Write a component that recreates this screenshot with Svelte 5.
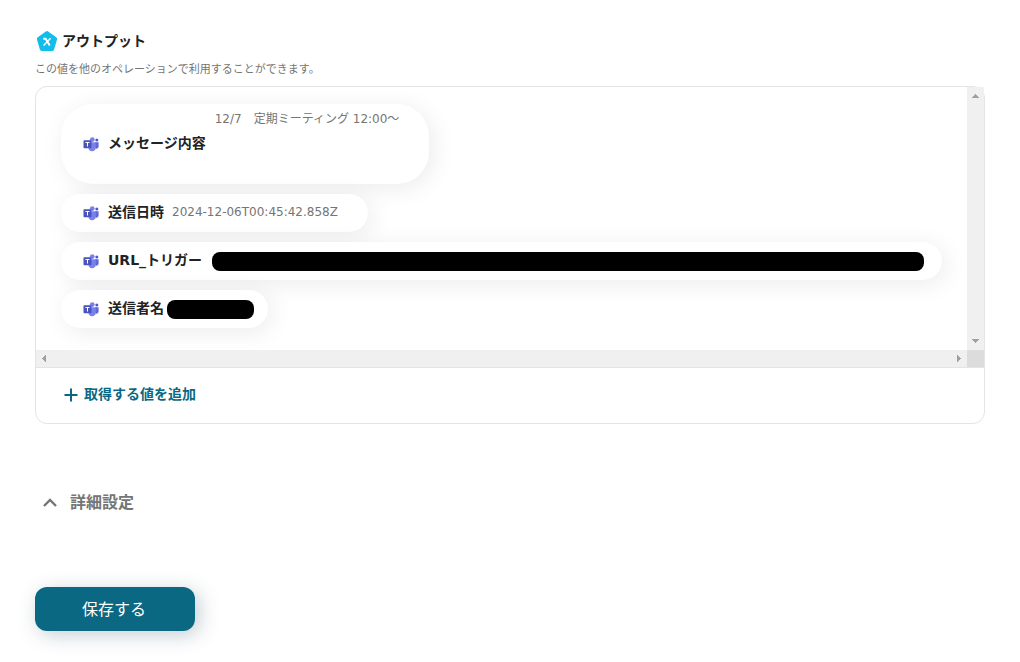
<script lang="ts">
    const outputs = [
        { label: "メッセージ内容", value: "12/7　定期ミーティング 12:00～", kind: "long" },
        { label: "送信日時", value: "2024-12-06T00:45:42.858Z", kind: "" },
        { label: "URL_トリガー", masked: 712, kind: "url" },
        { label: "送信者名", masked: 87, kind: "name" },
    ];
    let open = $state(false);
</script>

<main class="page">
    <header class="heading">
        <svg class="badge" viewBox="0 0 22 22" aria-hidden="true">
            <path
                d="M10.500 1.700a2.400 2.400 0 0 1 3 0l7.700 5.500a2.200 2.200 0 0 1 .8 2.400l-2.800 9.700a2.200 2.200 0 0 1-2 1.600H6.800a2.200 2.200 0 0 1-2-1.600L2 9.600a2.200 2.200 0 0 1 .8-2.400z"
                fill="#12bdec"
            />
            <path
                d="M8.200 8.800h2.400l4.200 6.600"
                fill="none"
                stroke="#fff"
                stroke-width="1.900"
            />
            <path d="M15.600 8.300L8.600 15.600" stroke="#fff" stroke-width="1.500" />
        </svg>
        <h1>アウトプット</h1>
    </header>
    <p class="note">この値を他のオペレーションで利用することができます。</p>

    <section class="panel">
        <div class="scroller">
            <ul class="list">
                {#each outputs as o}
                    <li class="chip {o.kind}">
                        <svg class="teams" viewBox="0 0 16 16" aria-hidden="true">
                            <circle cx="13.800" cy="4.100" r="1.500" fill="#5059c9" />
                            <path d="M12 6.300h3.600v4.400a2.300 2.300 0 0 1-3.600 1.600z" fill="#5f68d6" />
                            <circle cx="9.300" cy="3.600" r="2.400" fill="#7b83eb" />
                            <path d="M5.500 6.300h7.200v4.800a3.600 3.600 0 0 1-7.200 1z" fill="#7b83eb" />
                            <rect x="0.500" y="4.300" width="8" height="8" rx="0.700" fill="#4b53bc" />
                            <path d="M2.500 6.500h4M4.500 6.500v4" stroke="#fff" stroke-width="1" />
                        </svg>
                        <span class="label">{o.label}</span>
                        {#if o.masked}
                            <span class="mask" style="width: {o.masked}px"></span>
                        {:else}
                            <span class="value">{o.value}</span>
                        {/if}
                    </li>
                {/each}
            </ul>
            <div class="bar vertical">
                <svg viewBox="0 0 17 17"><path d="M5 11h7v-1h-1v-1h-1v-1H9V7H8v1H7v1H6v1H5z" /></svg>
                <svg viewBox="0 0 17 17"><path d="M5 6h7v1h-1v1h-1v1H9v1H8V9H7V8H6V7H5z" /></svg>
            </div>
            <div class="bar horizontal">
                <svg viewBox="0 0 17 17"><path d="M10 5v7H9v-1H8v-1H7V9H6V8h1V7h1V6h1V5z" /></svg>
                <svg viewBox="0 0 17 17"><path d="M7 5v7h1v-1h1v-1h1V9h1V8h-1V7H9V6H8V5z" /></svg>
            </div>
            <div class="corner"></div>
        </div>
        <button class="add" type="button">
            <svg viewBox="0 0 14 14" aria-hidden="true">
                <path d="M7 0.500v13M0.500 7h13" stroke="currentColor" stroke-width="2" />
            </svg>
            <span>取得する値を追加</span>
        </button>
    </section>

    <button class="advanced" type="button" aria-expanded={open} onclick={() => (open = !open)}>
        <svg viewBox="0 0 14 10" aria-hidden="true">
            <path d="M1 8l6-6 6 6" fill="none" stroke="currentColor" stroke-width="2.400" />
        </svg>
        <span>詳細設定</span>
    </button>

    <button class="save" type="button">保存する</button>
</main>

<style>
    :global(body) {
        background: #fff;
    }

    .page {
        padding: 30px 35px;
        color: #222;
        font-family: "DejaVu Sans", "Noto Sans CJK JP", sans-serif;
    }

    .heading {
        display: flex;
        align-items: center;
        gap: 5px;
        height: 22px;
    }

    .badge {
        width: 22px;
        height: 22px;
    }

    h1 {
        margin: 0;
        font-size: 14px;
        line-height: 20px;
    }

    .note {
        margin: 9px 0 7px;
        color: #757575;
        font-size: 11px;
        line-height: 18px;
    }

    .panel {
        border: 1px solid #e4e4e4;
        border-radius: 12px;
    }

    .scroller {
        display: grid;
        grid-template-columns: minmax(0, 1fr) 17px;
        grid-template-rows: auto 17px;
        border-bottom: 1px solid #e4e4e4;
    }

    .list {
        display: flex;
        flex-direction: column;
        align-items: flex-start;
        gap: 10px;
        margin: 0;
        padding: 17px 24px 22px 25px;
        list-style: none;
        overflow: hidden;
        border-top-left-radius: 12px;
    }

    .chip {
        display: flex;
        align-items: center;
        box-sizing: border-box;
        min-height: 38px;
        padding: 6px 30px 6px 22px;
        border-radius: 32px;
        background: #fff;
        box-shadow: 4px 4px 24px rgba(0, 0, 0, 0.08);
        white-space: nowrap;
    }

    .chip.url {
        padding-right: 18px;
    }

    .chip.name {
        padding-right: 14px;
    }

    .teams {
        flex: none;
        width: 16px;
        height: 16px;
        margin-right: 9px;
    }

    .label {
        padding-bottom: 2px;
        font-size: 14px;
        font-weight: 700;
        line-height: 20px;
    }

    .value {
        padding-bottom: 2px;
        margin-left: 8px;
        color: #757575;
        font-size: 12px;
        line-height: 17px;
    }

    .long .value {
        min-height: 66px;
        margin-left: 9px;
        padding: 1px 0;
    }

    .mask {
        height: 19px;
        margin-left: 10px;
        border-radius: 8px;
        background: #000;
    }

    .name .mask {
        margin-left: 3px;
    }

    .bar {
        display: flex;
        justify-content: space-between;
        background: #f0f0f0;
        fill: #a0a0a0;
    }

    .bar svg {
        width: 17px;
        height: 17px;
    }

    .vertical {
        flex-direction: column;
    }

    .corner {
        background: #dcdcdc;
    }

    button {
        border: 0;
        background: none;
        font-family: inherit;
        cursor: pointer;
    }

    .add {
        display: flex;
        align-items: center;
        gap: 6px;
        height: 54px;
        margin-bottom: 1px;
        padding: 0 28px;
        color: #0b6882;
        font-size: 14px;
        font-weight: 700;
    }

    .add span {
        padding-bottom: 4px;
    }

    .add svg {
        width: 14px;
        height: 14px;
    }

    .advanced {
        display: flex;
        align-items: center;
        gap: 13px;
        margin-top: 67px;
        padding: 0 8px;
        color: #757575;
        font-size: 16px;
        font-weight: 700;
        line-height: 24px;
    }

    .advanced svg {
        width: 14px;
        height: 10px;
    }

    .save {
        display: block;
        width: 160px;
        height: 44px;
        margin-top: 72px;
        padding: 0 2px 2px 0;
        border-radius: 12px;
        background: #0b6882;
        box-shadow: 4px 4px 20px rgba(20, 60, 80, 0.25);
        color: #fff;
        font-size: 16px;
    }
</style>
